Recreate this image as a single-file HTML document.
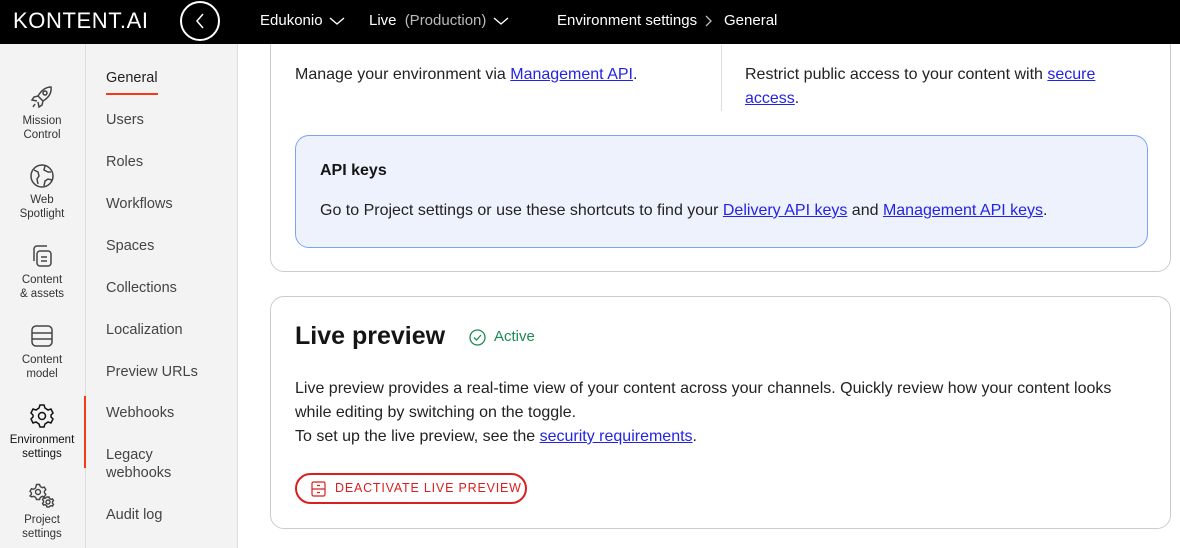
<!DOCTYPE html>
<html><head><meta charset="utf-8"><style>
*{box-sizing:border-box;margin:0;padding:0}
body{width:1180px;height:548px;overflow:hidden;font-family:"Liberation Sans",sans-serif;background:#fff;position:relative;color:#151515}
.top{position:absolute;left:0;top:0;width:1180px;height:44px;background:#000;color:#fff;z-index:10}
.top span{position:absolute;top:12px;font-size:15px;white-space:nowrap}
.rail{position:absolute;left:0;top:44px;width:86px;height:504px;background:#f3f3f3;border-right:1px solid #ddd}
.sub{position:absolute;left:86px;top:44px;width:152px;height:504px;background:#f3f3f3;border-right:1px solid #ddd}
.ri{position:absolute;left:0;width:84px;text-align:center;font-size:11.5px;line-height:14px;color:#333}
.ri svg{display:block;margin:0 auto 4px}
.si{position:absolute;left:20px;font-size:14.5px;color:#444;line-height:18px}
.card{position:absolute;left:270px;width:901px;border:1px solid #ccc;border-radius:14px;background:#fff}
.p{font-size:16px;line-height:24px;color:#222}
a{color:#2323e6;text-decoration:underline}
</style></head><body>
<div class="top">
<span style="left:13px;top:8px;font-size:22px;letter-spacing:0.6px;font-weight:300">KONTENT.AI</span>
<div style="position:absolute;left:180px;top:1px;width:40px;height:40px;border:2px solid #fff;border-radius:50%"></div>
<svg style="position:absolute;left:194px;top:13px" width="12" height="16"><path d="M9 1L3 8l6 7" stroke="#fff" fill="none" stroke-width="1.5"/></svg>
<span style="left:260px">Edukonio</span>
<svg style="position:absolute;left:329px;top:16px" width="16" height="10"><path d="M1 2l7 6 7-6" stroke="#fff" fill="none" stroke-width="1.4"/></svg>
<span style="left:369px">Live <span style="position:static;color:#bbb;margin-left:4px">(Production)</span></span>
<svg style="position:absolute;left:493px;top:16px" width="16" height="10"><path d="M1 2l7 6 7-6" stroke="#fff" fill="none" stroke-width="1.4"/></svg>
<span style="left:557px">Environment settings</span>
<svg style="position:absolute;left:705px;top:15px" width="8" height="12"><path d="M1 1l5 5-5 5" stroke="#bbb" fill="none" stroke-width="1.3"/></svg>
<span style="left:724px">General</span>
</div>
<div class="rail">
<div class="ri" style="top:40px"><svg width="26" height="26" viewBox="0 0 26 26" fill="none" stroke="#444" stroke-width="1.5"><path d="M22 3c-6 0-10 4-13 9l5 5c5-3 9-7 8-14zM9 12l-4 1-2 3 5 1M14 17l-1 4-3 2-1-5M6 20l-2 3"/><circle cx="16" cy="9" r="2"/></svg>Mission<br>Control</div>
<div class="ri" style="top:119px"><svg width="26" height="26" viewBox="0 0 26 26" fill="none" stroke="#444" stroke-width="1.5"><circle cx="13" cy="13" r="11"/><path d="M5 7l4 2 1 4-2 3 1 5M16 3l-1 4 4 2 3 0M15 23l1-5 3-2 4 1"/></svg>Web<br>Spotlight</div>
<div class="ri" style="top:199px"><svg width="26" height="26" viewBox="0 0 26 26" fill="none" stroke="#444" stroke-width="1.5"><rect x="8" y="8" width="14" height="15" rx="3"/><path d="M5 18V6a3 3 0 013-3h10M12 14h6M12 18h6"/></svg>Content<br>&amp; assets</div>
<div class="ri" style="top:279px"><svg width="26" height="26" viewBox="0 0 26 26" fill="none" stroke="#444" stroke-width="1.5"><rect x="3" y="3" width="20" height="20" rx="4"/><path d="M3 10h20M3 16h20"/></svg>Content<br>model</div>
<div class="ri" style="top:359px;color:#111"><svg width="26" height="26" viewBox="0 0 26 26" fill="none" stroke="#111" stroke-width="1.5"><circle cx="13" cy="13" r="3.5"/><path d="M11 2h4l1 3 3 2 3-1 2 4-2 2v2l2 2-2 4-3-1-3 2-1 3h-4l-1-3-3-2-3 1-2-4 2-2v-2L2 10l2-4 3 1 3-2z"/></svg>Environment<br>settings</div>
<div style="position:absolute;left:84px;top:352px;width:3px;height:72px;background:#f33b17"></div>
<div class="ri" style="top:439px"><svg width="26" height="26" viewBox="0 0 26 26" fill="none" stroke="#444" stroke-width="1.4"><circle cx="9" cy="9" r="2.5"/><path d="M7.5 1.5h3l.8 2 2 1.2 2-.6 1.5 2.6-1.4 1.5v1.6l1.4 1.5-1.5 2.6-2-.6-2 1.2-.8 2h-3l-.8-2-2-1.2-2 .6L1 12.9l1.4-1.5V9.8L1 8.3l1.5-2.6 2 .6 2-1.2z"/><circle cx="19" cy="19" r="2"/><path d="M18 14h2l.5 1.5 1.5.9 1.5-.5 1 1.7-1 1.1v1.6l1 1.1-1 1.7-1.5-.5-1.5.9L20 24h-2l-.5-1.5-1.5-.9-1.5.5-1-1.7 1-1.1v-1.6l-1-1.1 1-1.7 1.5.5 1.5-.9z"/></svg>Project<br>settings</div>
</div>
<div class="sub">
<div class="si" style="top:25px;color:#222">General</div>
<div style="position:absolute;left:20px;top:49px;width:52px;height:2px;background:#f33b17"></div>
<div class="si" style="top:67px">Users</div>
<div class="si" style="top:109px">Roles</div>
<div class="si" style="top:151px">Workflows</div>
<div class="si" style="top:193px">Spaces</div>
<div class="si" style="top:235px">Collections</div>
<div class="si" style="top:277px">Localization</div>
<div class="si" style="top:319px">Preview URLs</div>
<div class="si" style="top:360px">Webhooks</div>
<div class="si" style="top:402px">Legacy<br>webhooks</div>
<div class="si" style="top:462px">Audit log</div>
</div>
<div class="card" style="top:-20px;height:292px">
<div class="p" style="position:absolute;left:24px;top:82px">Manage your environment via <a>Management API</a>.</div>
<div style="position:absolute;left:450px;top:64px;width:1px;height:66px;background:#ddd"></div>
<div class="p" style="position:absolute;left:474px;top:82px;width:400px">Restrict public access to your content with <a>secure access</a>.</div>
<div style="position:absolute;left:24px;top:154px;width:853px;height:113px;background:#eef2fd;border:1px solid #7aa5f5;border-radius:14px">
<div style="position:absolute;left:24px;top:26px;font-weight:bold;font-size:16px">API keys</div>
<div class="p" style="position:absolute;left:24px;top:63px">Go to Project settings or use these shortcuts to find your <a>Delivery API keys</a> and <a>Management API keys</a>.</div>
</div>
</div>
<div class="card" style="top:296px;height:233px">
<div style="position:absolute;left:24px;top:25px;font-size:25px;font-weight:bold">Live preview</div>
<svg style="position:absolute;left:198px;top:32px" width="17" height="17" viewBox="0 0 17 17" fill="none" stroke="#1c8a53" stroke-width="1.3"><circle cx="8.5" cy="8.5" r="7.5"/><path d="M5 8.5l2.5 2.5 4.5-5"/></svg>
<div style="position:absolute;left:223px;top:31px;font-size:15px;color:#1c8a53">Active</div>
<div class="p" style="position:absolute;left:24px;top:80px;width:820px">Live preview provides a real-time view of your content across your channels. Quickly review how your content looks while editing by switching on the toggle.<br>To set up the live preview, see the <a>security requirements</a>.</div>
<div style="position:absolute;left:24px;top:176px;width:232px;height:31px;border:2px solid #db1f1f;border-radius:16px;color:#db1f1f;font-size:12.5px;letter-spacing:0.8px;padding:6px 0 0 38px;white-space:nowrap">DEACTIVATE LIVE PREVIEW</div>
<svg style="position:absolute;left:40px;top:184px" width="15" height="16" viewBox="0 0 15 16" fill="none" stroke="#db1f1f" stroke-width="1.2"><rect x="1" y="1" width="13" height="14" rx="1.5"/><path d="M1 8h13M6 4.5h3M6 11.5h3"/></svg>
</div>
</body></html>
